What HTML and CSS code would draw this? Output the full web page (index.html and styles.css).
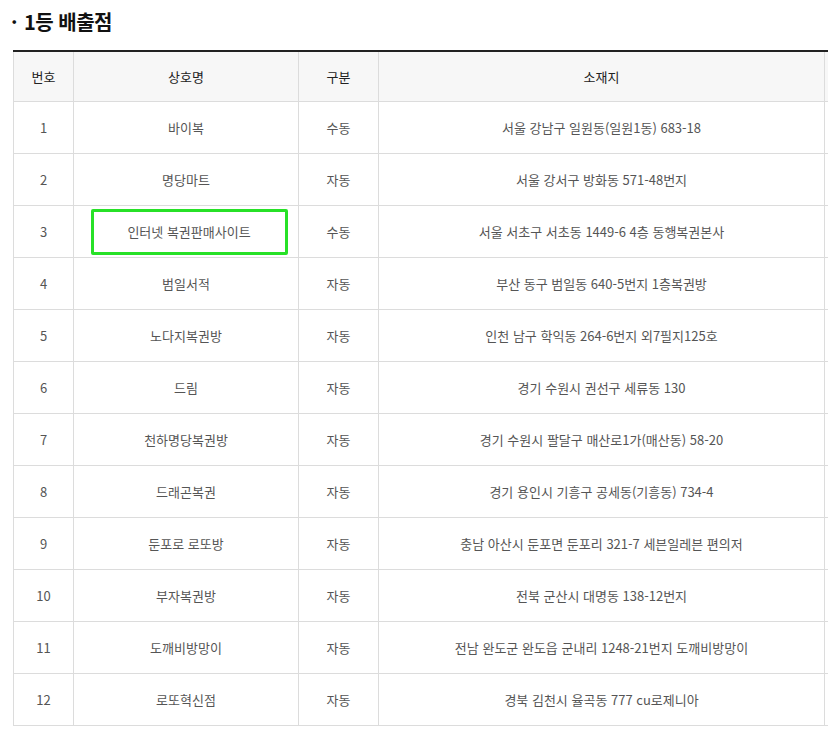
FILE: index.html
```html
<!DOCTYPE html>
<html lang="ko">
<head>
<meta charset="utf-8">
<link rel="stylesheet" href="styles.css">
</head>
<body>
<div class="page">
  <h3 class="title"><span class="dot">·</span>1등 배출점</h3>
  <div class="table-wrap">
    <table class="winners">
      <colgroup>
        <col class="c-no"><col class="c-name"><col class="c-type"><col class="c-addr"><col class="c-extra">
      </colgroup>
      <thead>
        <tr><th>번호</th><th>상호명</th><th>구분</th><th>소재지</th><th></th></tr>
      </thead>
      <tbody>
        <tr><td>1</td><td>바이복</td><td>수동</td><td>서울 강남구 일원동(일원1동) 683-18</td><td></td></tr>
        <tr><td>2</td><td>명당마트</td><td>자동</td><td>서울 강서구 방화동 571-48번지</td><td></td></tr>
        <tr><td>3</td><td><span class="highlight">인터넷 복권판매사이트</span></td><td>수동</td><td>서울 서초구 서초동 1449-6 4층 동행복권본사</td><td></td></tr>
        <tr><td>4</td><td>범일서적</td><td>자동</td><td>부산 동구 범일동 640-5번지 1층복권방</td><td></td></tr>
        <tr><td>5</td><td>노다지복권방</td><td>자동</td><td>인천 남구 학익동 264-6번지 외7필지125호</td><td></td></tr>
        <tr><td>6</td><td>드림</td><td>자동</td><td>경기 수원시 권선구 세류동 130</td><td></td></tr>
        <tr><td>7</td><td>천하명당복권방</td><td>자동</td><td>경기 수원시 팔달구 매산로1가(매산동) 58-20</td><td></td></tr>
        <tr><td>8</td><td>드래곤복권</td><td>자동</td><td>경기 용인시 기흥구 공세동(기흥동) 734-4</td><td></td></tr>
        <tr><td>9</td><td>둔포로 로또방</td><td>자동</td><td>충남 아산시 둔포면 둔포리 321-7 세븐일레븐 편의저</td><td></td></tr>
        <tr><td>10</td><td>부자복권방</td><td>자동</td><td>전북 군산시 대명동 138-12번지</td><td></td></tr>
        <tr><td>11</td><td>도깨비방망이</td><td>자동</td><td>전남 완도군 완도읍 군내리 1248-21번지 도깨비방망이</td><td></td></tr>
        <tr><td>12</td><td>로또혁신점</td><td>자동</td><td>경북 김천시 율곡동 777 cu로제니아</td><td></td></tr>
      </tbody>
    </table>
  </div>
</div>
</body>
</html>
```

FILE: styles.css
```css
html, body {
  margin: 0;
  padding: 0;
  background: #fff;
}
body {
  font-family: "Noto Sans CJK KR", "Noto Sans", sans-serif;
  overflow: hidden;
}
.page {
  padding: 8px 0 0 13px;
  width: 815px;
  overflow: hidden;
}
.title {
  margin: 0;
  height: 28px;
  font-size: 20px;
  line-height: 28px;
  font-weight: 700;
  color: #111;
  letter-spacing: -0.5px;
}
.dot {
  display: inline-block;
  width: 13px;
  margin-left: -2px;
}
.table-wrap {
  margin-top: 14px;
  width: 900px;
}
.winners {
  border-collapse: collapse;
  table-layout: fixed;
  width: 900px;
  border-top: 2px solid #222;
  font-size: 13px;
  color: #555;
}
.c-no { width: 60px; }
.c-name { width: 225px; }
.c-type { width: 80px; }
.c-addr { width: 446px; }
.c-extra { width: 89px; }
.winners th,
.winners td {
  border: 1px solid #dcdcdc;
  text-align: center;
  vertical-align: middle;
  padding: 0;
}
.winners th {
  height: 49px;
  background: #f7f7f7;
  color: #222;
  font-weight: 400;
  font-size: 13px;
}
.winners td {
  height: 51px;
}
.highlight {
  display: inline-flex;
  align-items: center;
  justify-content: center;
  width: 191px;
  height: 40px;
  border: 3px solid #27e127;
  border-radius: 2px;
  margin-left: 6px;
}
```
